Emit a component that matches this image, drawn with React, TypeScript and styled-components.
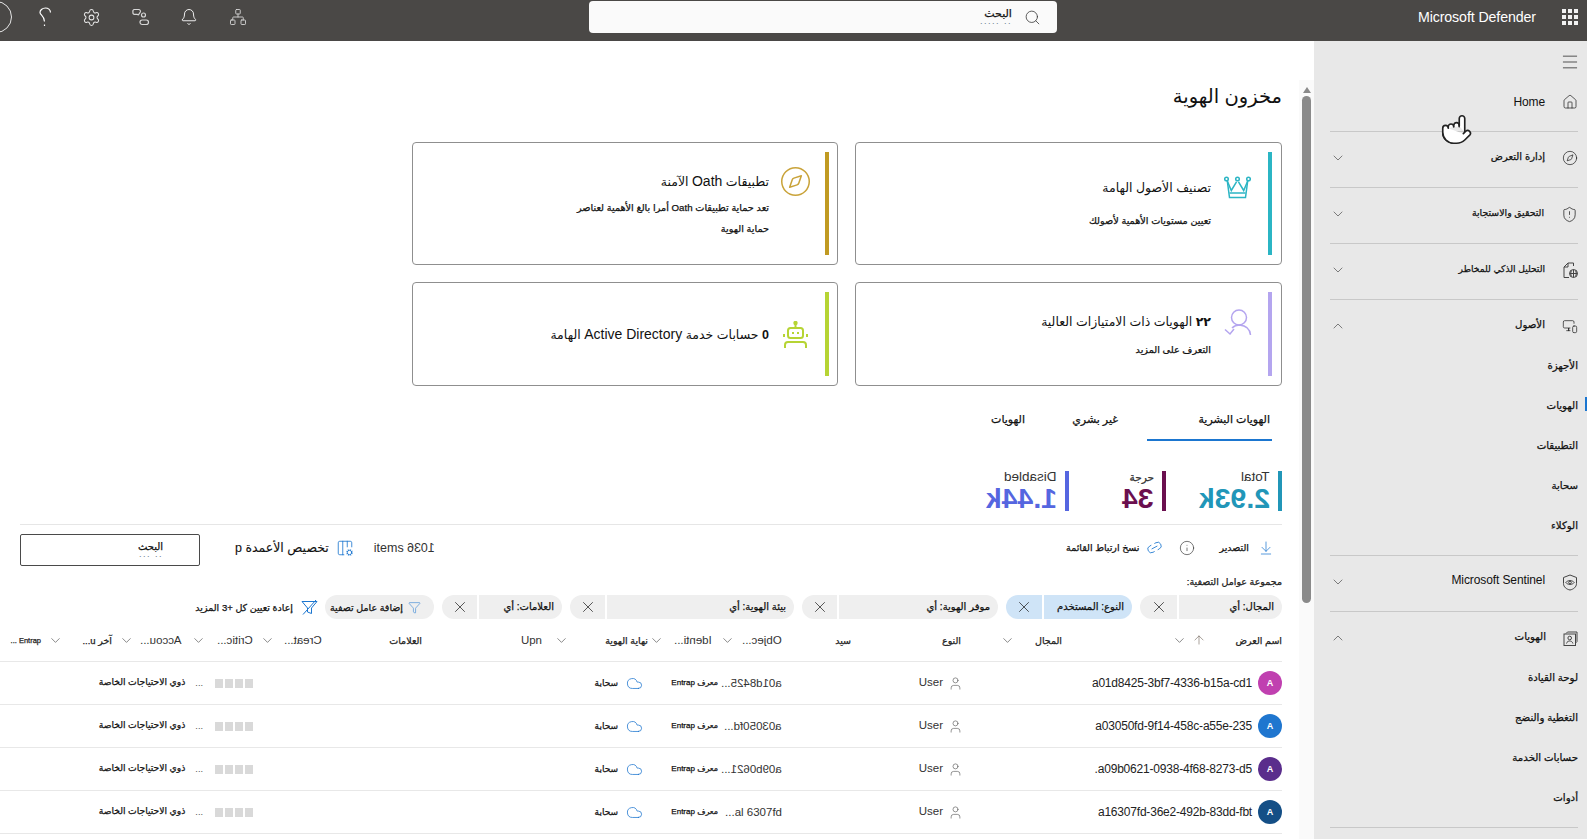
import React from 'react';
import styled, { createGlobalStyle, css } from 'styled-components';
import {
  ArrowDownToLine,
  ArrowUp,
  Bell,
  ChevronDown,
  ChevronUp,
  Cloud,
  Columns3Cog,
  Compass,
  Funnel,
  House,
  Info,
  Link2,
  Menu,
  MonitorSmartphone,
  Network,
  Pointer,
  Search,
  Settings,
  ShieldAlert,
  User,
  X
} from 'lucide-react';

const GlobalStyle = createGlobalStyle`
  html, body {
    margin: 0;
    padding: 0;
    height: 100%;
    overflow: hidden;
    background: #fff;
  }
  body {
    font-family: "Liberation Sans", "DejaVu Sans", sans-serif;
    color: #111;
  }
`;

// the small arabic labels read heavier than the regular weight
const ink = css`
  -webkit-text-stroke: 0.25px currentColor;
`;

const Page = styled.div`
  direction: rtl;
  width: 1587px;
  height: 839px;
  display: flex;
  flex-direction: column;
  overflow: hidden;
  position: relative;
`;

const TopBar = styled.header`
  height: 41px;
  flex: none;
  box-sizing: border-box;
  padding-bottom: 7px;
  background: #4a4846;
  display: flex;
  align-items: center;
  color: #fff;
  position: relative;
`;

const Waffle = styled.div`
  display: grid;
  grid-template-columns: repeat(3, 4px);
  gap: 2px;
  margin: 0 9px 0 0;
  span {
    width: 4px;
    height: 4px;
    background: #f2f2f2;
  }
`;

const Brand = styled.div`
  margin-right: 26px;
  font-size: 14.2px;
  direction: ltr;
  letter-spacing: -0.1px;
`;

const SearchBox = styled.div`
  width: 468px;
  height: 32px;
  box-sizing: border-box;
  margin: 0 361px 0 0;
  background: #fafafa;
  border-radius: 4px;
  display: flex;
  align-items: center;
  padding-right: 16px;
  gap: 12px;
  color: #333;
`;

const PlaceholderStack = styled.div<{ $size?: number }>`
  ${ink}
  display: flex;
  flex-direction: column;
  line-height: 9px;
  font-size: ${(p) => p.$size ?? 11}px;
  color: #111;
  margin-top: -2px;
  small {
    -webkit-text-stroke: 0;
    font-size: 9px;
    line-height: 6px;
    letter-spacing: 1.5px;
    color: #6b7a8c;
  }
`;

const TopIcons = styled.div`
  margin-right: auto;
  display: flex;
  flex-direction: row-reverse;
  align-items: center;
  gap: 30.5px;
  margin-left: -20px;
  svg {
    display: block;
  }
`;

const AccountCircle = styled.div`
  width: 32px;
  height: 32px;
  border: 1px solid #e6e6e6;
  border-radius: 50%;
  box-sizing: border-box;
  margin-right: -5px;
`;

const Body = styled.div`
  flex: 1;
  display: flex;
  min-height: 0;
`;

const Sidebar = styled.nav`
  width: 273px;
  flex: none;
  background: #e8e8e8;
`;

const MenuRow = styled.div`
  height: 42px;
  display: flex;
  align-items: center;
  padding-right: 7px;
`;

const NavSection = styled.section<{ $first?: boolean }>`
  margin: ${(p) => (p.$first ? '-7px' : '0')} 9px 0 16px;
  padding-bottom: 3px;
  border-bottom: 1px solid #c8c8c8;
`;

const NavRow = styled.div`
  ${ink}
  height: 52px;
  display: flex;
  align-items: center;
  gap: 17px;
  font-size: 10.2px;
  color: #111;
  svg {
    flex: none;
  }
`;

const NavLabel = styled.span<{ $size?: number }>`
  font-size: ${(p) => p.$size ?? 10.2}px;
  margin-top: -3px;
`;

const NavLatin = styled.span<{ $raised?: boolean }>`
  -webkit-text-stroke: 0;
  font-size: 12px;
  letter-spacing: -0.1px;
  margin-top: ${(p) => (p.$raised ? -5 : 0)}px;
`;

const NavChevron = styled.span`
  margin-right: auto;
  display: flex;
`;

const SubList = styled.div`
  margin: -7px 0 7px;
`;

const SubItem = styled.div`
  ${ink}
  height: 40px;
  display: flex;
  align-items: center;
  font-size: 10.2px;
  position: relative;
`;

const SelectedMark = styled.span`
  position: absolute;
  right: -9px;
  top: 12px;
  width: 2px;
  height: 14px;
  background: #1b76d0;
`;

const Gutter = styled.div`
  width: 15px;
  flex: none;
  margin-top: 39px;
  background: #fafafa;
  display: flex;
  flex-direction: column;
  align-items: center;
`;

const ScrollArrow = styled.div`
  margin-top: 7px;
  width: 0;
  height: 0;
  border-left: 4px solid transparent;
  border-right: 4px solid transparent;
  border-bottom: 6px solid #8a8a8a;
`;

const ScrollThumb = styled.div`
  margin-top: 3px;
  width: 9px;
  height: 507px;
  border-radius: 5px;
  background: #8a8a8a;
`;

const Main = styled.main`
  flex: 1;
  min-width: 0;
  padding-right: 17px;
  overflow: hidden;
`;

const Title = styled.h1`
  margin: 0;
  padding-top: 37px;
  height: 64px;
  line-height: 36px;
  font-size: 19.5px;
  font-weight: 400;
  color: #111;
`;

const CardGrid = styled.div`
  display: grid;
  grid-template-columns: 427px 426px;
  grid-template-rows: 123px 104px;
  gap: 17px;
`;

const Card = styled.article`
  border: 1px solid #8f8f8f;
  border-radius: 4px;
  padding: 9px;
  display: flex;
  gap: 17px;
  box-sizing: border-box;
  &:nth-child(even) {
    padding-right: 8px;
    gap: 16px;
  }
`;

const CardAccent = styled.div<{ $color: string }>`
  width: 4px;
  flex: none;
  background: ${(p) => p.$color};
`;

const CardBody = styled.div<{ $gap: number }>`
  align-self: center;
  display: grid;
  grid-template-columns: 27px auto;
  column-gap: 13px;
  row-gap: ${(p) => p.$gap}px;
  align-items: center;
  justify-items: center;
`;

const CardTitle = styled.div`
  justify-self: start;
  font-size: 12.5px;
  line-height: 20px;
  color: #111;
  b {
    font-weight: 700;
  }
  i {
    font-style: normal;
    font-size: 14px;
  }
`;

const CardDesc = styled.div`
  ${ink}
  justify-self: start;
  grid-column: 2;
  font-size: 9.7px;
  line-height: 21px;
  max-width: 200px;
  color: #111;
`;

const CompassBadge = styled(Compass)`
  margin: -3px;
`;

const Tabs = styled.div`
  margin: 22px 10px 0 0;
  display: flex;
  gap: 27px;
`;

const Tab = styled.div<{ $width: number; $active?: boolean }>`
  ${ink}
  width: ${(p) => p.$width}px;
  height: 22px;
  line-height: 22px;
  font-size: 11px;
  padding-bottom: 9px;
  box-sizing: content-box;
  text-indent: 2px;
  border-bottom: 2px solid ${(p) => (p.$active ? '#1b76d0' : 'transparent')};
  white-space: nowrap;
`;

const Stats = styled.div`
  margin-top: 30px;
  display: flex;
`;

const Stat = styled.div<{ $color: string; $width?: number }>`
  width: ${(p) => (p.$width ? `${p.$width}px` : 'auto')};
  height: 40px;
  box-sizing: border-box;
  padding-right: 8px;
  position: relative;
  &::before {
    content: '';
    position: absolute;
    right: 0;
    top: 0;
    bottom: 0;
    width: 4px;
    background: ${(p) => p.$color};
  }
`;

const StatInner = styled.div`
  padding-right: 4px;
`;

const StatLabel = styled.div<{ $arabic?: boolean }>`
  height: 14px;
  line-height: 12px;
  font-size: ${(p) => (p.$arabic ? 10.5 : 13.5)}px;
  color: #333;
  ${(p) => p.$arabic && ink}
`;

const StatValue = styled.div<{ $color: string }>`
  height: 26px;
  line-height: 27px;
  font-size: 28.4px;
  font-weight: 700;
  color: ${(p) => p.$color};
`;

const Mirrored = styled.span`
  display: inline-block;
  direction: ltr;
  transform: scaleX(-1);
`;

const LtrText = styled.span`
  display: inline-block;
  direction: ltr;
`;

const Divider = styled.div`
  margin: 13px 0 0 20px;
  height: 1px;
  background: #e6e6e6;
`;

const Toolbar = styled.div`
  margin: 9px 0 0 20px;
  height: 32px;
  display: flex;
  align-items: center;
  justify-content: space-between;
`;

const ToolGroup = styled.div<{ $pad?: number }>`
  ${ink}
  display: flex;
  align-items: center;
  padding-right: ${(p) => p.$pad ?? 0}px;
  padding-bottom: 5px;
  font-size: 9.5px;
  color: #111;
`;

const ToolBlock = styled.div`
  display: flex;
  align-items: center;
`;

const ToolAction = styled.div<{ $mr?: number; $gap?: number }>`
  display: flex;
  align-items: center;
  gap: ${(p) => p.$gap ?? 6}px;
  margin-right: ${(p) => p.$mr ?? 0}px;
`;

const LinkGlyph = styled(Link2)`
  transform: rotate(-28deg);
`;

const ItemsCount = styled.span`
  -webkit-text-stroke: 0;
  display: flex;
  gap: 3px;
  font-size: 12.5px;
  color: #333;
`;

const ColumnsLabel = styled.span`
  font-size: 12.5px;
  -webkit-text-stroke: 0.1px currentColor;
`;

const TableSearch = styled.div`
  width: 180px;
  height: 32px;
  margin-right: 35px;
  box-sizing: border-box;
  border: 1px solid #4a4a4a;
  border-radius: 2px;
  display: flex;
  align-items: center;
  padding-right: 36px;
`;

const FilterCaption = styled.div`
  ${ink}
  margin-top: 8px;
  height: 16px;
  line-height: 16px;
  font-size: 9.5px;
  color: #222;
`;

const ChipRow = styled.div`
  margin-top: 5px;
  height: 24px;
  display: flex;
  align-items: stretch;
  gap: 8px;
`;

const Chip = styled.div`
  display: flex;
  gap: 2px;
`;

const ChipLabel = styled.div<{ $width: number; $selected?: boolean }>`
  ${ink}
  width: ${(p) => p.$width}px;
  box-sizing: border-box;
  padding-right: 8px;
  background: ${(p) => (p.$selected ? '#cfe4f7' : '#efefef')};
  border-radius: 0 12px 12px 0;
  font-size: 10px;
  line-height: 24px;
  color: #111;
`;

const ChipClose = styled.div<{ $width: number; $selected?: boolean }>`
  width: ${(p) => p.$width}px;
  background: ${(p) => (p.$selected ? '#cfe4f7' : '#efefef')};
  border-radius: 12px 0 0 12px;
  display: flex;
  align-items: center;
  justify-content: center;
  color: #222;
`;

const AddFilter = styled.div`
  ${ink}
  width: 109px;
  box-sizing: border-box;
  padding-right: 8px;
  background: #efefef;
  border-radius: 12px;
  display: flex;
  align-items: center;
  justify-content: center;
  gap: 5px;
  font-size: 9.5px;
  margin-left: -2px;
`;

const ResetFilters = styled.div`
  ${ink}
  display: flex;
  align-items: center;
  gap: 8px;
  font-size: 9.5px;
  margin-right: 1px;
`;

const HeadRow = styled.div`
  height: 43px;
  display: flex;
  align-items: center;
  border-bottom: 1px solid #e8e8e8;
  box-sizing: border-box;
`;

const HeadCell = styled.div<{ $width: number; $end?: number }>`
  ${ink}
  width: ${(p) => p.$width}px;
  flex: none;
  box-sizing: border-box;
  padding-left: ${(p) => p.$end ?? 0}px;
  display: flex;
  align-items: center;
  justify-content: space-between;
  font-size: 9.5px;
  color: #222;
  white-space: nowrap;
`;

const HeadLatin = styled.span`
  -webkit-text-stroke: 0;
  font-size: 11.5px;
  color: #333;
`;

const HeadTiny = styled.span`
  font-size: 7.5px;
  direction: ltr;
`;

const HeadControls = styled.span`
  display: flex;
  align-items: center;
  gap: 5px;
`;

const TableRow = styled.div`
  height: 43px;
  box-sizing: border-box;
  border-bottom: 1px solid #e8e8e8;
  display: grid;
  grid-template-columns: 319px 181px 64px 75px 390px 1fr;
  align-items: center;
  white-space: nowrap;
`;

const NameCell = styled.div`
  display: flex;
  align-items: center;
  gap: 6px;
  font-size: 12px;
  letter-spacing: -0.2px;
  color: #222;
`;

const Avatar = styled.div<{ $color: string }>`
  width: 24px;
  height: 24px;
  border-radius: 50%;
  background: ${(p) => p.$color};
  color: #fff;
  font-size: 9px;
  font-weight: 700;
  display: flex;
  align-items: center;
  justify-content: center;
`;

const TypeCell = styled.div`
  display: flex;
  align-items: center;
  gap: 5px;
  font-size: 11.5px;
  color: #333;
  span {
    margin-top: -3px;
  }
`;

const ObjectCell = styled.div`
  font-size: 11.5px;
  color: #333;
`;

const IdentityCell = styled.div`
  ${ink}
  font-size: 8px;
  color: #111;
  margin-top: -2px;
`;

const EndCell = styled.div`
  display: flex;
  align-items: center;
  gap: 8px;
  font-size: 9px;
  span {
    ${ink}
  }
`;

const CriticalCell = styled.div`
  display: flex;
  align-items: center;
  font-size: 9.2px;
`;

const CriticalText = styled.span`
  ${ink}
  margin-top: -3px;
`;

const Squares = styled.div`
  display: flex;
  gap: 2px;
  span {
    width: 8px;
    height: 9px;
    background: #d9d9d9;
  }
`;

const Dots = styled.span`
  margin: 0 12px 0 10px;
  color: #555;
`;

const CursorOverlay = styled.div`
  position: absolute;
  left: 1440px;
  top: 113px;
  transform: scaleX(-1);
  svg {
    display: block;
  }
`;

// icons that lucide has no match for
const HelpIcon = () => (
  <svg width="14" height="20" viewBox="0 0 14 20" fill="none" stroke="#fff" strokeWidth="1.2">
    <path d="M12.5 5.5C12.5 2.5 10 1 7.5 1 4 1 2 3.5 2 5.5c0 2.500 4.500 3.500 4.500 9" />
    <path d="M6.5 17.5v1.5" />
  </svg>
);

const FeedbackIcon = () => (
  <svg width="18" height="18" viewBox="0 0 18 18" fill="none" stroke="#d6d6d6" strokeWidth="1.2">
    <path d="M2 1.5h4.500a1.800 1.800 0 0 1 1.800 2.500L6.500 6.800 5 6.400H2.500A1.800 1.800 0 0 1 1 4 2 2 0 0 1 2 1.500z" />
    <circle cx="11.5" cy="7" r="2" />
    <rect x="8" y="12" width="8.5" height="4.5" rx="2.2" />
  </svg>
);

const ThreatIcon = () => (
  <svg width="16" height="17" viewBox="0 0 16 17" fill="none" stroke="#444" strokeWidth="1">
    <path d="M6 1h5.500v3M6 1 2 5v10.500h5" />
    <path d="M6 1v4H2" />
    <circle cx="11.5" cy="11.5" r="4" />
    <path d="M11.5 7.5v8M7.5 11.5h8M9.500 8.500c-1 2-1 4 0 6M13.500 8.500c1 2 1 4 0 6" />
  </svg>
);

const SentinelIcon = () => (
  <svg width="16" height="17" viewBox="0 0 16 17" fill="none" stroke="#444" strokeWidth="1">
    <path d="M8 1l6.500 2.500v6c0 3.500-3 5.800-6.500 6.500-3.500-.7-6.500-3-6.500-6.500v-6z" />
    <path d="M3.800 8.500C5.500 6 10.500 6 12.200 8.500 10.500 11 5.500 11 3.800 8.500z" />
    <circle cx="8" cy="8.5" r="1.3" />
  </svg>
);

const IdentityIcon = () => (
  <svg width="15" height="15" viewBox="0 0 15 15" fill="none" stroke="#444" strokeWidth="1">
    <path d="M3 2.500l1.500-1.500h9.500v9.500l-1.500 1.500" />
    <rect x="1" y="3" width="11.5" height="11.5" fill="#e8e8e8" />
    <circle cx="6.7" cy="7" r="1.8" />
    <path d="M3.500 12.500c.5-2 2-2.500 3.200-2.500s2.700.5 3.200 2.500" />
  </svg>
);

const CrownIcon = () => (
  <svg width="27" height="23" viewBox="0 0 27 23" fill="none" stroke="#2bb5c4" strokeWidth="1.5">
    <circle cx="2.5" cy="3" r="1.8" />
    <circle cx="13.5" cy="3" r="1.8" />
    <circle cx="24.5" cy="3" r="1.8" />
    <path d="M3.300 5l4 9.500 5.200-8.700M23.700 5l-4 9.500-5.200-8.700" />
    <path d="M3.300 5 5.500 21.500h16L23.700 5" />
    <path d="M5.500 17h16" />
  </svg>
);

const GuardedUserIcon = () => (
  <svg width="28" height="28" viewBox="0 0 28 28" fill="none" stroke="#b4a5ef" strokeWidth="1.5">
    <circle cx="15" cy="9.5" r="7.5" />
    <path d="M26.500 27c-.5-6-5-9.500-11-10-3 0-5.500 1-7.500 3" />
    <path d="M1 21.500l5 4.500 4-5" />
  </svg>
);

const BotIcon = () => (
  <svg width="25" height="27" viewBox="0 0 25 27" fill="none" stroke="#b6d434" strokeWidth="2">
    <circle cx="12.5" cy="2" r="1.2" fill="#b6d434" />
    <path d="M12.500 3v4" />
    <rect x="5" y="7" width="15" height="10" rx="2.5" />
    <path d="M9 12h2M14 12h2M1 13v3M24 13v3" />
    <path d="M2 27v-3a3 3 0 0 1 3-3h15a3 3 0 0 1 3 3v3" />
  </svg>
);

const ResetFilterIcon = () => (
  <svg width="17" height="17" viewBox="0 0 17 17" fill="none" stroke="#1b76d0" strokeWidth="1">
    <path d="M1 2.500h15l-5.500 6.500v5.500l-4-1.500V9z" />
    <path d="M2 15.500 15 1" />
  </svg>
);

const cards = [
  { color: '#2bb5c4', icon: <CrownIcon />, title: 'تصنيف الأصول الهامة', desc: 'تعيين مستويات الأهمية لأصولك', gap: 11 },
  {
    color: '#c09a22',
    icon: <CompassBadge size={33} color="#c9a33a" strokeWidth={1.1} />,
    title: (
      <>
        تطبيقات <i>Oath</i> الآمنة
      </>
    ),
    desc: 'تعد حماية تطبيقات Oath أمرا بالغ الأهمية لعناصر حماية الهوية',
    gap: 2
  },
  {
    color: '#b4a5ef',
    icon: <GuardedUserIcon />,
    title: (
      <>
        <b>٢٢</b> الهويات ذات الامتيازات العالية
      </>
    ),
    desc: 'التعرف على المزيد',
    gap: 3
  },
  {
    color: '#b6d434',
    icon: <BotIcon />,
    title: (
      <>
        <b>0</b> حسابات خدمة <i>Active Directory</i> الهامة
      </>
    ),
    gap: 8
  }
];

const navSections = [
  { label: 'إدارة التعرض', icon: <Compass size={16} strokeWidth={1} />, size: 10 },
  { label: 'التحقيق والاستجابة', icon: <ShieldAlert size={17} strokeWidth={1} />, size: 9.4 },
  { label: 'التحليل الذكي للمخاطر', icon: <ThreatIcon />, size: 9.2 }
];

const assetItems = ['الأجهزة', 'الهويات', 'التطبيقات', 'سحابة', 'الوكلاء'];
const identityItems = ['لوحة القيادة', 'التغطية والنضج', 'حسابات الخدمة', 'أدوات'];

const chips = [
  { label: 'المجال: أي', w: 103, x: 37 },
  { label: 'النوع: المستخدم', w: 88, x: 36, selected: true },
  { label: 'موفر الهوية: أي', w: 159, x: 35 },
  { label: 'بيئة الهوية: أي', w: 187, x: 35 },
  { label: 'العلامات: أي', w: 83, x: 35 }
];

const rows = [
  { name: 'a01d8425-3bf7-4336-b15a-cd1', object: 'a01d8425...', color: '#c040b0' },
  { name: 'a03050fd-9f14-458c-a55e-235', object: 'a03050fd...', color: '#1f76cf' },
  { name: 'a09b0621-0938-4f68-8273-d5.', object: 'a09b0621...', color: '#5a2d8c' },
  { name: 'a16307fd-36e2-492b-83dd-fbt', object: '...al 6307fd', plain: true, color: '#144f86' }
];

const Chevron = () => <ChevronDown size={15} strokeWidth={1} color="#444" />;

export default function App() {
  return (
    <Page>
      <GlobalStyle />
      <TopBar>
        <Waffle>
          {Array.from({ length: 9 }, (_, i) => (
            <span key={i} />
          ))}
        </Waffle>
        <Brand>Microsoft Defender</Brand>
        <SearchBox>
          <Search size={17} strokeWidth={1.1} color="#333" />
          <PlaceholderStack>
            <span>البحث</span>
            <small>.. .....</small>
          </PlaceholderStack>
        </SearchBox>
        <TopIcons>
          <AccountCircle />
          <HelpIcon />
          <Settings size={19} strokeWidth={1.3} color="#e6e6e6" />
          <FeedbackIcon />
          <Bell size={18} strokeWidth={1.2} color="#fff" />
          <Network size={18} strokeWidth={1.2} color="#d6d6d6" />
        </TopIcons>
      </TopBar>
      <Body>
        <Sidebar>
          <MenuRow>
            <Menu size={20} strokeWidth={0.9} color="#222" />
          </MenuRow>
          <NavSection $first>
            <NavRow>
              <House size={16} strokeWidth={1} />
              <NavLatin>Home</NavLatin>
            </NavRow>
          </NavSection>
          {navSections.map((s) => (
            <NavSection key={s.label}>
              <NavRow>
                {s.icon}
                <NavLabel $size={s.size}>{s.label}</NavLabel>
                <NavChevron>
                  <ChevronDown size={16} strokeWidth={1} color="#444" />
                </NavChevron>
              </NavRow>
            </NavSection>
          ))}
          <NavSection>
            <NavRow>
              <MonitorSmartphone size={16} strokeWidth={1} />
              <NavLabel>الأصول</NavLabel>
              <NavChevron>
                <ChevronUp size={16} strokeWidth={1} color="#444" />
              </NavChevron>
            </NavRow>
            <SubList>
              {assetItems.map((item, i) => (
                <SubItem key={item}>
                  {item}
                  {i === 1 && <SelectedMark />}
                </SubItem>
              ))}
            </SubList>
          </NavSection>
          <NavSection>
            <NavRow>
              <SentinelIcon />
              <NavLatin $raised>Microsoft Sentinel</NavLatin>
              <NavChevron>
                <ChevronDown size={16} strokeWidth={1} color="#444" />
              </NavChevron>
            </NavRow>
          </NavSection>
          <NavSection>
            <NavRow>
              <IdentityIcon />
              <NavLabel>الهويات</NavLabel>
              <NavChevron>
                <ChevronUp size={16} strokeWidth={1} color="#444" />
              </NavChevron>
            </NavRow>
            <SubList>
              {identityItems.map((item) => (
                <SubItem key={item}>{item}</SubItem>
              ))}
            </SubList>
          </NavSection>
        </Sidebar>
        <Gutter>
          <ScrollArrow />
          <ScrollThumb />
        </Gutter>
        <Main>
          <Title>مخزون الهوية</Title>
          <CardGrid>
            {cards.map((c) => (
              <Card key={c.color}>
                <CardAccent $color={c.color} />
                <CardBody $gap={c.gap}>
                  {c.icon}
                  <CardTitle>{c.title}</CardTitle>
                  {c.desc && <CardDesc>{c.desc}</CardDesc>}
                </CardBody>
              </Card>
            ))}
          </CardGrid>
          <Tabs>
            <Tab $width={125} $active>
              الهويات البشرية
            </Tab>
            <Tab $width={66}>غير بشري</Tab>
            <Tab $width={34}>الهويات</Tab>
          </Tabs>
          <Stats>
            <Stat $color="#2196b8" $width={116}>
              <StatInner>
                <StatLabel>
                  <Mirrored>Total</Mirrored>
                </StatLabel>
                <StatValue $color="#2196b8">
                  <Mirrored>2.93k</Mirrored>
                </StatValue>
              </StatInner>
            </Stat>
            <Stat $color="#6b0f4f" $width={97}>
              <StatInner>
                <StatLabel $arabic>حرجة</StatLabel>
                <StatValue $color="#6b0f4f">
                  <Mirrored>34</Mirrored>
                </StatValue>
              </StatInner>
            </Stat>
            <Stat $color="#5566e0">
              <StatInner>
                <StatLabel>
                  <Mirrored>Disabled</Mirrored>
                </StatLabel>
                <StatValue $color="#5566e0">
                  <Mirrored>1.44k</Mirrored>
                </StatValue>
              </StatInner>
            </Stat>
          </Stats>
          <Divider />
          <Toolbar>
            <ToolGroup $pad={8}>
              <ToolAction $gap={9}>
                <ArrowDownToLine size={16} strokeWidth={1.1} color="#1b76d0" />
                <span>التصدير</span>
              </ToolAction>
              <ToolAction $mr={24}>
                <Info size={16} strokeWidth={1} color="#333" />
              </ToolAction>
              <ToolAction $mr={16} $gap={7}>
                <LinkGlyph size={17} strokeWidth={1.1} color="#1b76d0" />
                <span>نسخ ارتباط القائمة</span>
              </ToolAction>
            </ToolGroup>
            <ToolBlock>
              <ToolGroup>
                <ItemsCount>
                  <Mirrored>1036</Mirrored>
                  <span>items</span>
                </ItemsCount>
                <ToolAction $mr={20} $gap={7}>
                  <Columns3Cog size={18} strokeWidth={1.1} color="#1b76d0" />
                  <ColumnsLabel>تخصيص الأعمدة p</ColumnsLabel>
                </ToolAction>
              </ToolGroup>
              <TableSearch>
                <PlaceholderStack $size={10}>
                  <span>البحث</span>
                  <small>.. ...</small>
                </PlaceholderStack>
              </TableSearch>
            </ToolBlock>
          </Toolbar>
          <FilterCaption>مجموعة عوامل التصفية:</FilterCaption>
          <ChipRow>
            {chips.map((c) => (
              <Chip key={c.label}>
                <ChipLabel $width={c.w} $selected={c.selected}>
                  {c.label}
                </ChipLabel>
                <ChipClose $width={c.x} $selected={c.selected}>
                  <X size={18} strokeWidth={1} />
                </ChipClose>
              </Chip>
            ))}
            <AddFilter>
              <Funnel size={13} strokeWidth={1} color="#1b76d0" />
              <span>إضافة عامل تصفية</span>
            </AddFilter>
            <ResetFilters>
              <ResetFilterIcon />
              <span>إعادة تعيين كل +3 المزيد</span>
            </ResetFilters>
          </ChipRow>
          <HeadRow>
            <HeadCell $width={220} $end={110}>
              <span>اسم العرض</span>
              <HeadControls>
                <ArrowUp size={14} strokeWidth={1} color="#6a5f55" />
                <Chevron />
              </HeadControls>
            </HeadCell>
            <HeadCell $width={101} $end={39}>
              <span>المجال</span>
              <Chevron />
            </HeadCell>
            <HeadCell $width={110}>النوع</HeadCell>
            <HeadCell $width={69}>سيد</HeadCell>
            <HeadCell $width={70} $end={8}>
              <HeadLatin>
                <Mirrored>Objec...</Mirrored>
              </HeadLatin>
              <Chevron />
            </HeadCell>
            <HeadCell $width={64} $end={1}>
              <HeadLatin>
                <Mirrored>Identi...</Mirrored>
              </HeadLatin>
              <Chevron />
            </HeadCell>
            <HeadCell $width={106} $end={12}>
              <span>نهاية الهوية</span>
              <Chevron />
            </HeadCell>
            <HeadCell $width={120}>
              <HeadLatin>Upn</HeadLatin>
            </HeadCell>
            <HeadCell $width={100}>العلامات</HeadCell>
            <HeadCell $width={69} $end={7}>
              <HeadLatin>
                <Mirrored>Creat...</Mirrored>
              </HeadLatin>
              <Chevron />
            </HeadCell>
            <HeadCell $width={71} $end={9}>
              <HeadLatin>
                <Mirrored>Critic...</Mirrored>
              </HeadLatin>
              <Chevron />
            </HeadCell>
            <HeadCell $width={70} $end={7}>
              <HeadLatin>
                <Mirrored>Accou...</Mirrored>
              </HeadLatin>
              <Chevron />
            </HeadCell>
            <HeadCell $width={71} $end={7}>
              <span>آخر u...</span>
              <Chevron />
            </HeadCell>
            <HeadCell $width={41}>
              <HeadTiny>... Entrap</HeadTiny>
            </HeadCell>
          </HeadRow>
          {rows.map((r) => (
            <TableRow key={r.name}>
              <NameCell>
                <Avatar $color={r.color}>A</Avatar>
                <span>{r.name}</span>
              </NameCell>
              <TypeCell>
                <User size={15} strokeWidth={1} color="#555" />
                <span>User</span>
              </TypeCell>
              <ObjectCell>{r.plain ? <LtrText>{r.object}</LtrText> : <Mirrored>{r.object}</Mirrored>}</ObjectCell>
              <IdentityCell>معرف Entrap</IdentityCell>
              <EndCell>
                <Cloud size={17} strokeWidth={1.1} color="#1f76cf" />
                <span>سحابة</span>
              </EndCell>
              <CriticalCell>
                <Squares>
                  <span />
                  <span />
                  <span />
                  <span />
                </Squares>
                <Dots>...</Dots>
                <CriticalText>ذوي الاحتياجات الخاصة</CriticalText>
              </CriticalCell>
            </TableRow>
          ))}
        </Main>
      </Body>
      <CursorOverlay>
        <Pointer size={33} strokeWidth={1.2} color="#222" fill="#fff" />
      </CursorOverlay>
    </Page>
  );
}
